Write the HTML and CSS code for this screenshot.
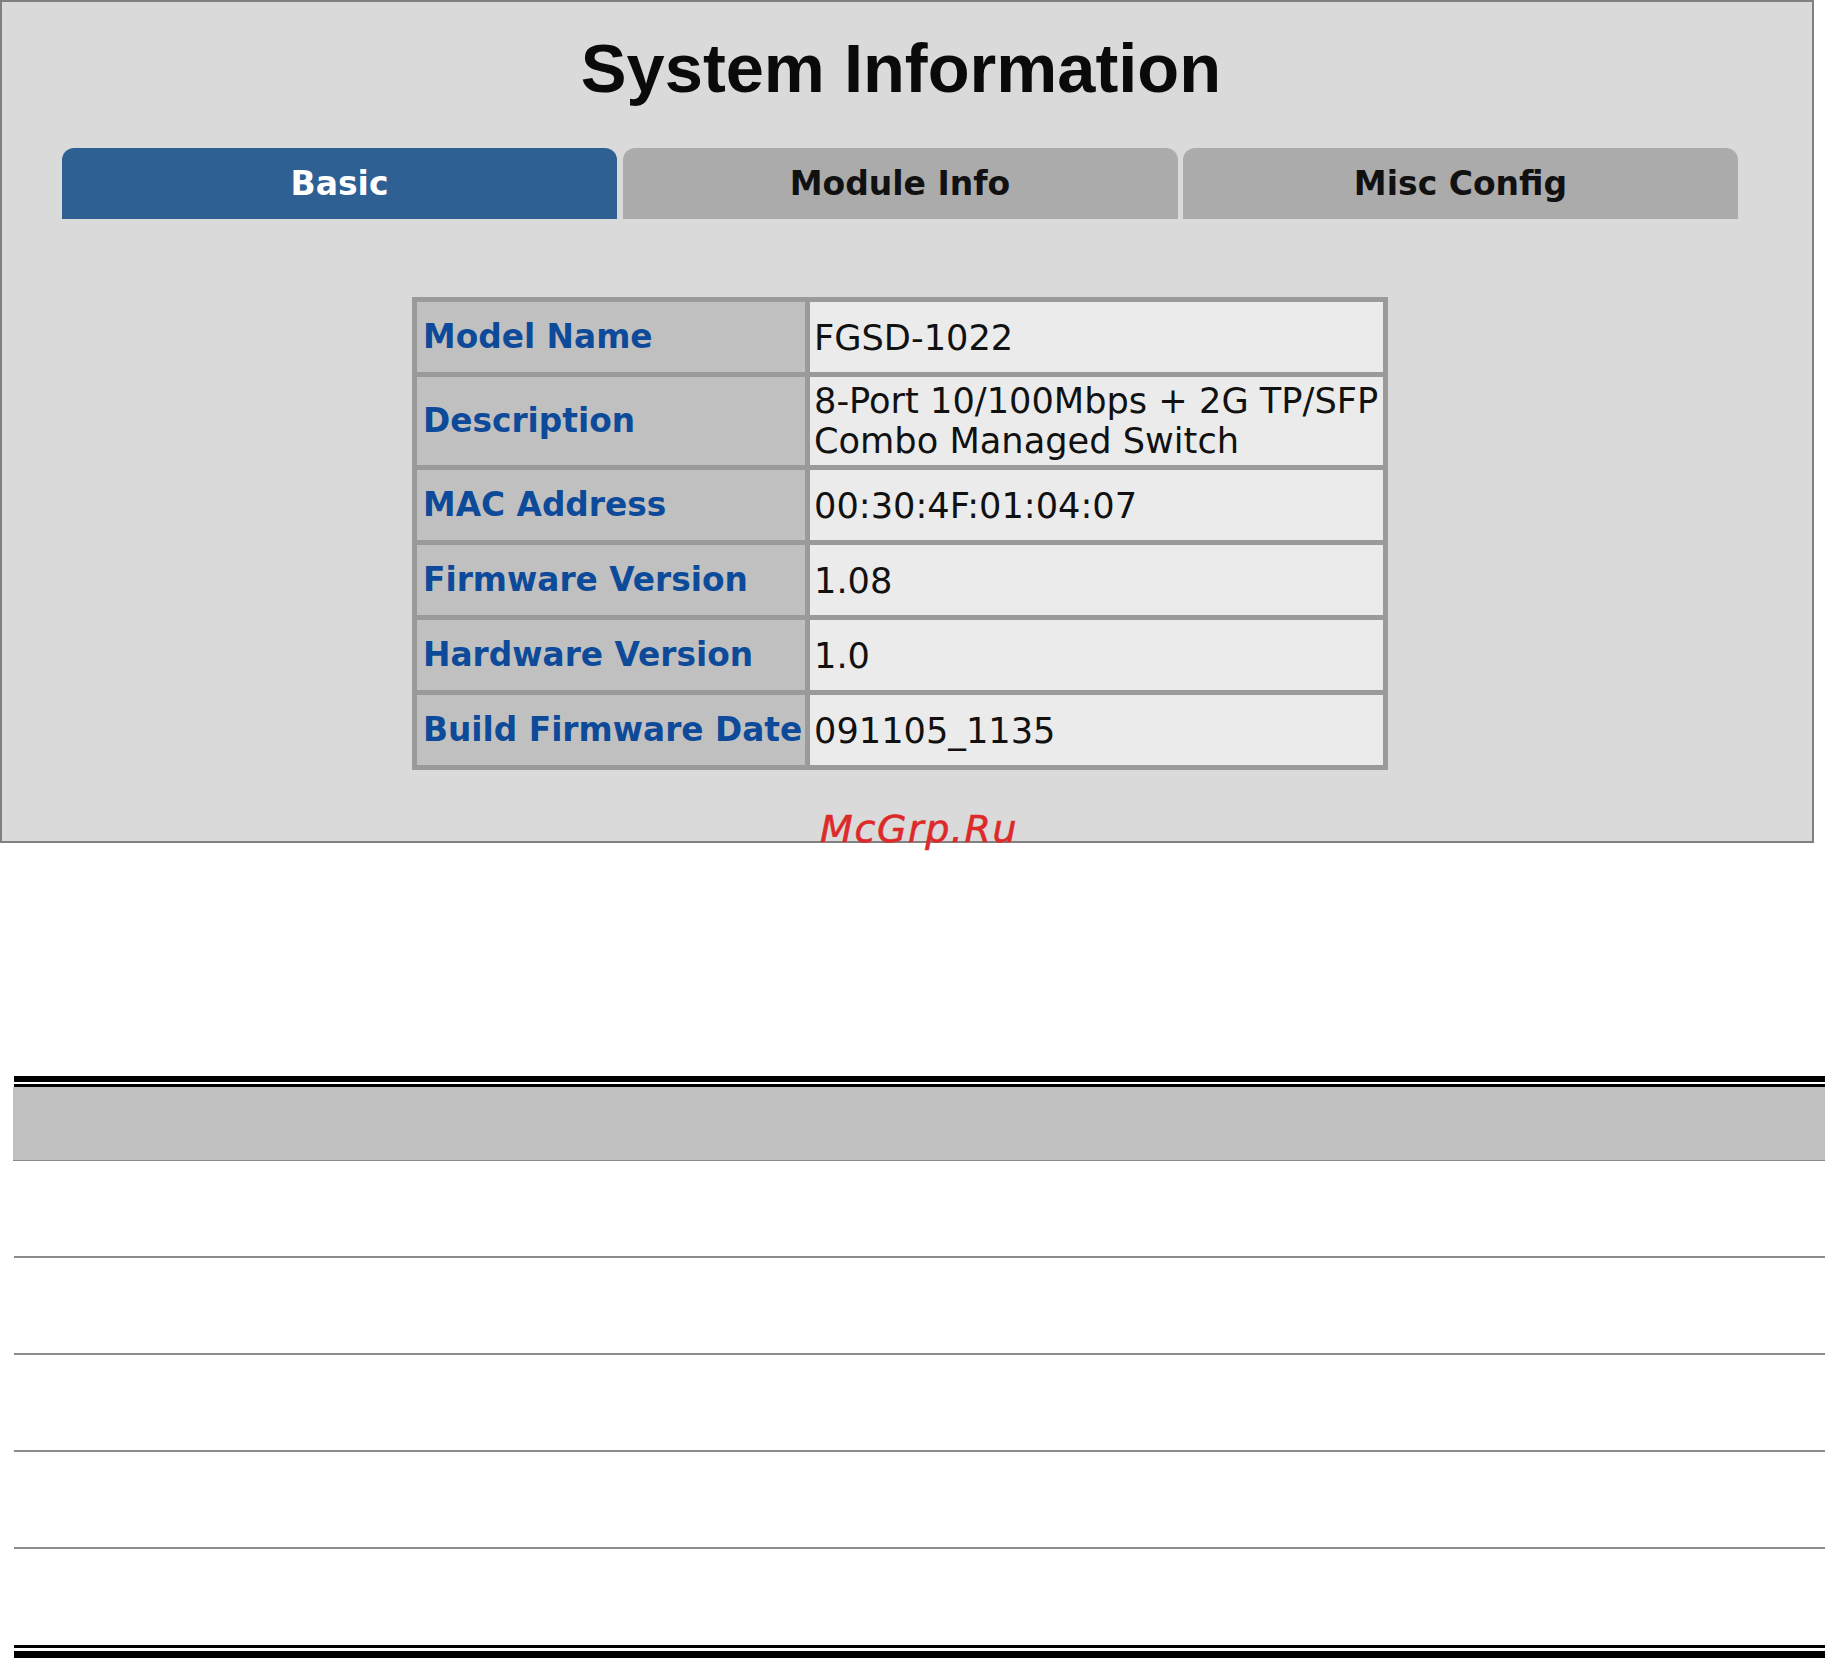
FILE: index.html
```html
<!DOCTYPE html>
<html lang="en">
<head>
<meta charset="utf-8">
<title>System Information</title>
<link rel="stylesheet" href="styles.css">
</head>
<body>
<div class="panel">
  <div class="content">
    <h1 class="title">System Information</h1>
    <div class="tabs">
      <div class="tab tab-active">Basic</div>
      <div class="tab">Module Info</div>
      <div class="tab">Misc Config</div>
    </div>
    <table class="info">
      <colgroup><col class="col-label"><col class="col-value"></colgroup>
      <tr class="row"><td class="label">Model Name</td><td class="value">FGSD-1022</td></tr>
      <tr class="row row-tall"><td class="label">Description</td><td class="value value-multi">8-Port 10/100Mbps + 2G TP/SFP<br>Combo Managed Switch</td></tr>
      <tr class="row"><td class="label">MAC Address</td><td class="value">00:30:4F:01:04:07</td></tr>
      <tr class="row"><td class="label">Firmware Version</td><td class="value">1.08</td></tr>
      <tr class="row"><td class="label">Hardware Version</td><td class="value">1.0</td></tr>
      <tr class="row"><td class="label">Build Firmware Date</td><td class="value">091105_1135</td></tr>
    </table>
  </div>
  <div class="watermark">McGrp.Ru</div>
</div>

<div class="sheet">
  <div class="rule-top"></div>
  <div class="sheet-head"></div>
  <div class="sheet-row"></div>
  <div class="sheet-row"></div>
  <div class="sheet-row"></div>
  <div class="sheet-row"></div>
  <div class="sheet-row sheet-row-last"></div>
  <div class="rule-bottom"></div>
</div>
</body>
</html>
```
FILE: styles.css
```css
html, body {
  margin: 0;
  padding: 0;
  background: #ffffff;
}

body {
  width: 1825px;
  height: 1658px;
  overflow: hidden;
  font-family: "DejaVu Sans", Verdana, sans-serif;
}

.panel {
  position: relative;
  box-sizing: border-box;
  width: 1814px;
  height: 843px;
  background: #dadada;
  border: 2px solid #808080;
}

.content {
  width: 1798px;
  padding-top: 33px;
}

.title {
  margin: 0;
  font-family: "Liberation Sans", Arial, sans-serif;
  font-weight: bold;
  font-size: 68.6px;
  line-height: 68px;
  color: #0a0a0a;
  text-align: center;
}

.tabs {
  display: flex;
  gap: 5.5px;
  margin: 45px 0 0 60px;
}

.tab {
  width: 555px;
  height: 71px;
  display: flex;
  align-items: center;
  justify-content: center;
  background: #ababab;
  border-radius: 12px 12px 0 0;
  font-weight: bold;
  font-size: 33px;
  color: #111111;
}

.tab-active {
  background: #2e6093;
  color: #ffffff;
}

.info {
  margin: 78px 0 0 410px;
  width: 976px;
  table-layout: fixed;
  border-collapse: separate;
  border-spacing: 5px;
  background: #9a9a9a;
}

.col-label {
  width: 388px;
}

.col-value {
  width: 573px;
}

.info td {
  box-sizing: border-box;
  padding: 0;
  vertical-align: middle;
  white-space: nowrap;
  overflow: visible;
}

.row td {
  height: 70px;
}

.row-tall td {
  height: 88px;
}

.label {
  padding-left: 6px !important;
  background: #c0c0c0;
  color: #0d4a99;
  font-weight: bold;
  font-size: 32.8px;
}

.value {
  padding-left: 4px !important;
  background: #ebebeb;
  color: #111111;
  font-size: 35.2px;
}

.value-multi {
  line-height: 40px;
}

.watermark {
  position: absolute;
  left: 818px;
  top: 808px;
  font-family: "DejaVu Sans", Verdana, sans-serif;
  font-style: italic;
  font-size: 38px;
  line-height: 38px;
  letter-spacing: 1.6px;
  color: #dc2a2a;
  -webkit-text-stroke: 0.6px #dc2a2a;
}

.sheet {
  margin: 233px 0 0 14px;
  width: 1811px;
}

.rule-top {
  height: 2px;
  border-top: 6px solid #000000;
  border-bottom: 3px solid #000000;
}

.sheet-head {
  height: 73px;
  background: #c0c0c0;
  border-bottom: 1px solid #8a8a8a;
  margin-left: -1px;
}

.sheet-row {
  height: 95px;
  border-bottom: 2px solid #8c8c8c;
}

.sheet-row-last {
  height: 96px;
  border-bottom: none;
}

.rule-bottom {
  height: 3px;
  border-top: 3px solid #000000;
  border-bottom: 7px solid #000000;
}
```
